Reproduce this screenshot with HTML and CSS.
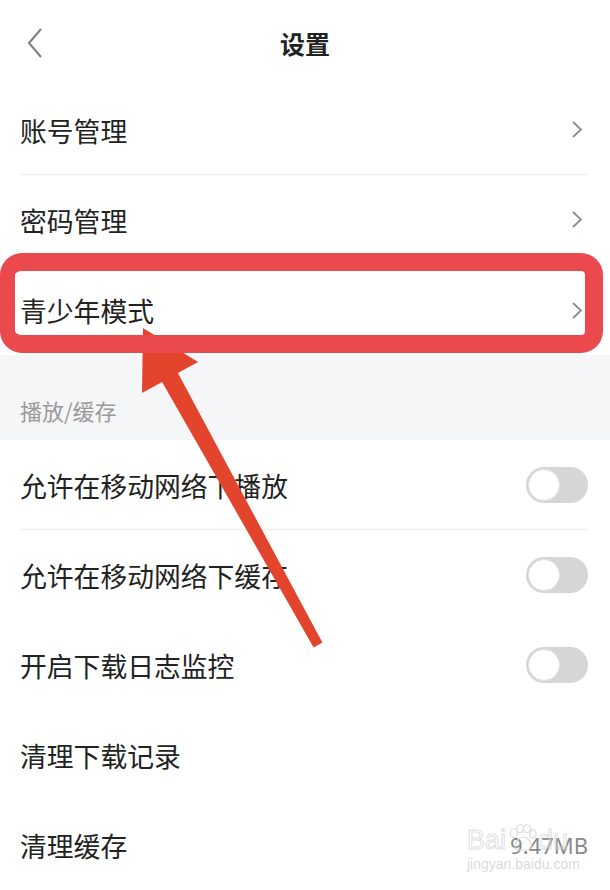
FILE: index.html
```html
<!DOCTYPE html>
<html lang="zh-CN">

<head>
    <meta charset="UTF-8" />
    <meta name="viewport" content="width=device-width, initial-scale=1.0" />
    <title>设置</title>
    <link rel="stylesheet" href="styles.css">
</head>

<body>
    <div class="page">
        <div class="topbar">
            <div class="back">
                <svg width="16" height="30" viewBox="0 0 16 30">
                    <polyline points="14,1 2,15 14,29" fill="none" stroke="#7c7c7c" stroke-width="2" />
                </svg>
            </div>
            <div class="title">设置</div>
            <div></div>
        </div>

        <div class="row line">
            <span class="label">账号管理</span>
            <svg class="arrow-right" width="11" height="17" viewBox="0 0 11 17">
                <polyline points="1,1 9,8.5 1,16" fill="none" stroke="#8a8a8a" stroke-width="1.8" />
            </svg>
        </div>
        <div class="row line">
            <span class="label">密码管理</span>
            <svg class="arrow-right" width="11" height="17" viewBox="0 0 11 17">
                <polyline points="1,1 9,8.5 1,16" fill="none" stroke="#8a8a8a" stroke-width="1.8" />
            </svg>
        </div>
        <div class="row">
            <span class="label">青少年模式</span>
            <svg class="arrow-right" width="11" height="17" viewBox="0 0 11 17">
                <polyline points="1,1 9,8.5 1,16" fill="none" stroke="#8a8a8a" stroke-width="1.8" />
            </svg>
        </div>

        <div class="section">播放/缓存</div>

        <div class="row line">
            <span class="label">允许在移动网络下播放</span>
            <span class="switch"><span class="knob"></span></span>
        </div>
        <div class="row">
            <span class="label">允许在移动网络下缓存</span>
            <span class="switch"><span class="knob"></span></span>
        </div>
        <div class="row">
            <span class="label">开启下载日志监控</span>
            <span class="switch"><span class="knob"></span></span>
        </div>
        <div class="row">
            <span class="label">清理下载记录</span>
        </div>
        <div class="row">
            <span class="label">清理缓存</span>
            <span class="size">9.47MB</span>
        </div>

        <!-- 标注箭头 -->
        <svg class="pointer" width="610" height="890" viewBox="0 0 610 890">
            <polygon
                points="143,328 198,362 177.9,373.1 322.4,642.6 313.6,647.4 162.1,381.9 142,393"
                fill="#e2452b" />
        </svg>

        <!-- 红框 -->
        <div class="highlight"></div>

        <div class="watermark">
            <span class="wm-logo">Bai<span class="paw">
                <svg width="30" height="28" viewBox="0 0 30 28">
                    <g fill="none" stroke="#dcdcdc" stroke-width="1.2">
                        <ellipse cx="7" cy="9" rx="3.5" ry="4.5" />
                        <ellipse cx="13" cy="4.5" rx="3.5" ry="4" />
                        <ellipse cx="20" cy="4.5" rx="3.5" ry="4" />
                        <ellipse cx="26" cy="10" rx="3.2" ry="4.2" />
                        <path d="M8,24 C8,16 14,13 16,13 C19,13 25,17 24,24 C22,27 10,27 8,24 Z" />
                    </g>
                </svg></span>du</span>
            <span class="wm-url">jingyan.baidu.com</span>
        </div>
    </div>
</body>

</html>
```

FILE: styles.css
```css
body {
    margin: 0;
    background: #ffffff;
    font-family: "Noto Sans CJK SC", "Noto Sans", sans-serif;
    color: #222222;
}

.page {
    position: relative;
    width: 610px;
    height: 890px;
    overflow: hidden;
}

.topbar {
    display: grid;
    grid-template-columns: 1fr auto 1fr;
    align-items: center;
    height: 85px;
}

.back {
    display: flex;
    padding-left: 27px;
}

.title {
    font-size: 25px;
    font-weight: bold;
    color: #222222;
}

.row {
    display: flex;
    align-items: center;
    justify-content: space-between;
    height: 90px;
    box-sizing: border-box;
    margin: 0 22px 0 20px;
}

.row.line {
    border-bottom: 1px solid #ececec;
}

.label {
    font-size: 26.8px;
    line-height: 34px;
    padding-top: 2px;
}

.arrow-right {
    margin-right: 5px;
}

.section {
    height: 85px;
    box-sizing: border-box;
    padding: 41px 20px 0;
    background: #f5f6f8;
    font-size: 22px;
    line-height: 28px;
    color: #9a9a9a;
}

.switch {
    display: inline-flex;
    align-items: center;
    width: 62px;
    height: 36px;
    padding: 2px;
    box-sizing: border-box;
    border-radius: 18px;
    background: #d6d6d6;
}

.knob {
    width: 32px;
    height: 32px;
    box-sizing: border-box;
    border-radius: 50%;
    background: #ffffff;
    border: 1px solid #e2e2e2;
}

.size {
    font-size: 22px;
    color: #8a8a8a;
    font-family: "Noto Sans", sans-serif;
}

.pointer {
    position: absolute;
    top: 0;
    left: 0;
    pointer-events: none;
}

.highlight {
    position: absolute;
    top: 253px;
    left: 0;
    width: 603px;
    height: 100px;
    box-sizing: border-box;
    border: 18px solid #ea4a4e;
    border-left-width: 15px;
    border-radius: 22px;
}

.watermark {
    position: absolute;
    left: 467px;
    top: 824px;
    display: flex;
    flex-direction: column;
    pointer-events: none;
    font-family: "Liberation Sans", sans-serif;
}

.wm-logo {
    display: flex;
    align-items: flex-end;
    font-size: 27px;
    line-height: 30px;
    color: rgba(255, 255, 255, 0.2);
    -webkit-text-stroke: 1px rgba(200, 200, 200, 0.6);
}

.paw {
    display: flex;
    margin: 0 1px 3px;
}

.wm-url {
    font-size: 14px;
    line-height: 18px;
    color: rgba(205, 205, 205, 0.75);
}
```
